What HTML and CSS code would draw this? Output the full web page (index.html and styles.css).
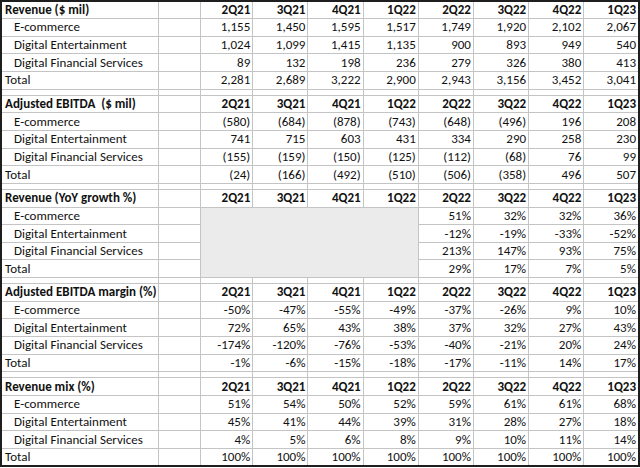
FILE: index.html
```html
<!DOCTYPE html>
<html>
<head>
<meta charset="utf-8">
<link rel="stylesheet" href="styles.css">
</head>
<body>
<table class="fin">
<colgroup>
<col class="c-label"><col class="c-gap"><col class="c-first"><col class="c-q"><col class="c-q"><col class="c-q"><col class="c-q"><col class="c-q"><col class="c-q"><col class="c-q">
</colgroup>
<tbody>
<tr class="hd"><td class="lab">Revenue ($ mil)</td><td></td><td>2Q21</td><td>3Q21</td><td>4Q21</td><td>1Q22</td><td>2Q22</td><td>3Q22</td><td>4Q22</td><td>1Q23</td></tr>
<tr><td class="lab sub">E-commerce</td><td></td><td>1,155</td><td>1,450</td><td>1,595</td><td>1,517</td><td>1,749</td><td>1,920</td><td>2,102</td><td>2,067</td></tr>
<tr><td class="lab sub">Digital Entertainment</td><td></td><td>1,024</td><td>1,099</td><td>1,415</td><td>1,135</td><td>900</td><td>893</td><td>949</td><td>540</td></tr>
<tr><td class="lab sub">Digital Financial Services</td><td></td><td>89</td><td>132</td><td>198</td><td>236</td><td>279</td><td>326</td><td>380</td><td>413</td></tr>
<tr><td class="lab">Total</td><td></td><td>2,281</td><td>2,689</td><td>3,222</td><td>2,900</td><td>2,943</td><td>3,156</td><td>3,452</td><td>3,041</td></tr>
<tr class="sep"><td></td><td></td><td></td><td></td><td></td><td></td><td></td><td></td><td></td><td></td></tr>

<tr class="hd"><td class="lab">Adjusted EBITDA&nbsp; ($ mil)</td><td></td><td>2Q21</td><td>3Q21</td><td>4Q21</td><td>1Q22</td><td>2Q22</td><td>3Q22</td><td>4Q22</td><td>1Q23</td></tr>
<tr><td class="lab sub">E-commerce</td><td></td><td>(580)</td><td>(684)</td><td>(878)</td><td>(743)</td><td>(648)</td><td>(496)</td><td>196</td><td>208</td></tr>
<tr><td class="lab sub">Digital Entertainment</td><td></td><td>741</td><td>715</td><td>603</td><td>431</td><td>334</td><td>290</td><td>258</td><td>230</td></tr>
<tr><td class="lab sub">Digital Financial Services</td><td></td><td>(155)</td><td>(159)</td><td>(150)</td><td>(125)</td><td>(112)</td><td>(68)</td><td>76</td><td>99</td></tr>
<tr><td class="lab">Total</td><td></td><td>(24)</td><td>(166)</td><td>(492)</td><td>(510)</td><td>(506)</td><td>(358)</td><td>496</td><td>507</td></tr>
<tr class="sep"><td></td><td></td><td></td><td></td><td></td><td></td><td></td><td></td><td></td><td></td></tr>

<tr class="hd"><td class="lab">Revenue (YoY growth %)</td><td></td><td>2Q21</td><td>3Q21</td><td>4Q21</td><td>1Q22</td><td>2Q22</td><td>3Q22</td><td>4Q22</td><td>1Q23</td></tr>
<tr><td class="lab sub">E-commerce</td><td></td><td class="na" rowspan="4" colspan="4"></td><td>51%</td><td>32%</td><td>32%</td><td>36%</td></tr>
<tr><td class="lab sub">Digital Entertainment</td><td></td><td>-12%</td><td>-19%</td><td>-33%</td><td>-52%</td></tr>
<tr><td class="lab sub">Digital Financial Services</td><td></td><td>213%</td><td>147%</td><td>93%</td><td>75%</td></tr>
<tr><td class="lab">Total</td><td></td><td>29%</td><td>17%</td><td>7%</td><td>5%</td></tr>
<tr class="sep"><td></td><td></td><td></td><td></td><td></td><td></td><td></td><td></td><td></td><td></td></tr>

<tr class="hd"><td class="lab">Adjusted EBITDA margin (%)</td><td></td><td>2Q21</td><td>3Q21</td><td>4Q21</td><td>1Q22</td><td>2Q22</td><td>3Q22</td><td>4Q22</td><td>1Q23</td></tr>
<tr><td class="lab sub">E-commerce</td><td></td><td>-50%</td><td>-47%</td><td>-55%</td><td>-49%</td><td>-37%</td><td>-26%</td><td>9%</td><td>10%</td></tr>
<tr><td class="lab sub">Digital Entertainment</td><td></td><td>72%</td><td>65%</td><td>43%</td><td>38%</td><td>37%</td><td>32%</td><td>27%</td><td>43%</td></tr>
<tr><td class="lab sub">Digital Financial Services</td><td></td><td>-174%</td><td>-120%</td><td>-76%</td><td>-53%</td><td>-40%</td><td>-21%</td><td>20%</td><td>24%</td></tr>
<tr><td class="lab">Total</td><td></td><td>-1%</td><td>-6%</td><td>-15%</td><td>-18%</td><td>-17%</td><td>-11%</td><td>14%</td><td>17%</td></tr>
<tr class="sep"><td></td><td></td><td></td><td></td><td></td><td></td><td></td><td></td><td></td><td></td></tr>

<tr class="hd"><td class="lab">Revenue mix (%)</td><td></td><td>2Q21</td><td>3Q21</td><td>4Q21</td><td>1Q22</td><td>2Q22</td><td>3Q22</td><td>4Q22</td><td>1Q23</td></tr>
<tr><td class="lab sub">E-commerce</td><td></td><td>51%</td><td>54%</td><td>50%</td><td>52%</td><td>59%</td><td>61%</td><td>61%</td><td>68%</td></tr>
<tr><td class="lab sub">Digital Entertainment</td><td></td><td>45%</td><td>41%</td><td>44%</td><td>39%</td><td>31%</td><td>28%</td><td>27%</td><td>18%</td></tr>
<tr><td class="lab sub">Digital Financial Services</td><td></td><td>4%</td><td>5%</td><td>6%</td><td>8%</td><td>9%</td><td>10%</td><td>11%</td><td>14%</td></tr>
<tr><td class="lab">Total</td><td></td><td>100%</td><td>100%</td><td>100%</td><td>100%</td><td>100%</td><td>100%</td><td>100%</td><td>100%</td></tr>
</tbody>
</table>
</body>
</html>
```

FILE: styles.css
```css
html, body {
  margin: 0;
  padding: 0;
  background: #ffffff;
}

.fin {
  width: 640px;
  border-collapse: collapse;
  table-layout: fixed;
  border: 2px solid #1e1e1e;
  font-family: "Carlito", "Lato", "Liberation Sans", sans-serif;
  font-size: 13px;
  color: #111111;
}

.c-label { width: 157px; }
.c-gap { width: 42px; }
.c-first { width: 52px; }
.c-q { width: 55px; }

.fin tr {
  height: 17.65px;
}

.fin td {
  border: 1px solid #c4c4c4;
  padding: 0 2px;
  text-align: right;
  white-space: nowrap;
  line-height: 14px;
  vertical-align: middle;
}

.fin td.lab {
  text-align: left;
  padding-left: 3px;
}

.fin td.sub {
  padding-left: 12px;
}

.fin tr.hd td {
  font-weight: bold;
}

.fin tr.sep {
  height: 6px;
}

.fin tr.sep td {
  padding: 0;
  line-height: 0;
  font-size: 0;
}

.fin td.na {
  background: #ebebeb;
}
```
